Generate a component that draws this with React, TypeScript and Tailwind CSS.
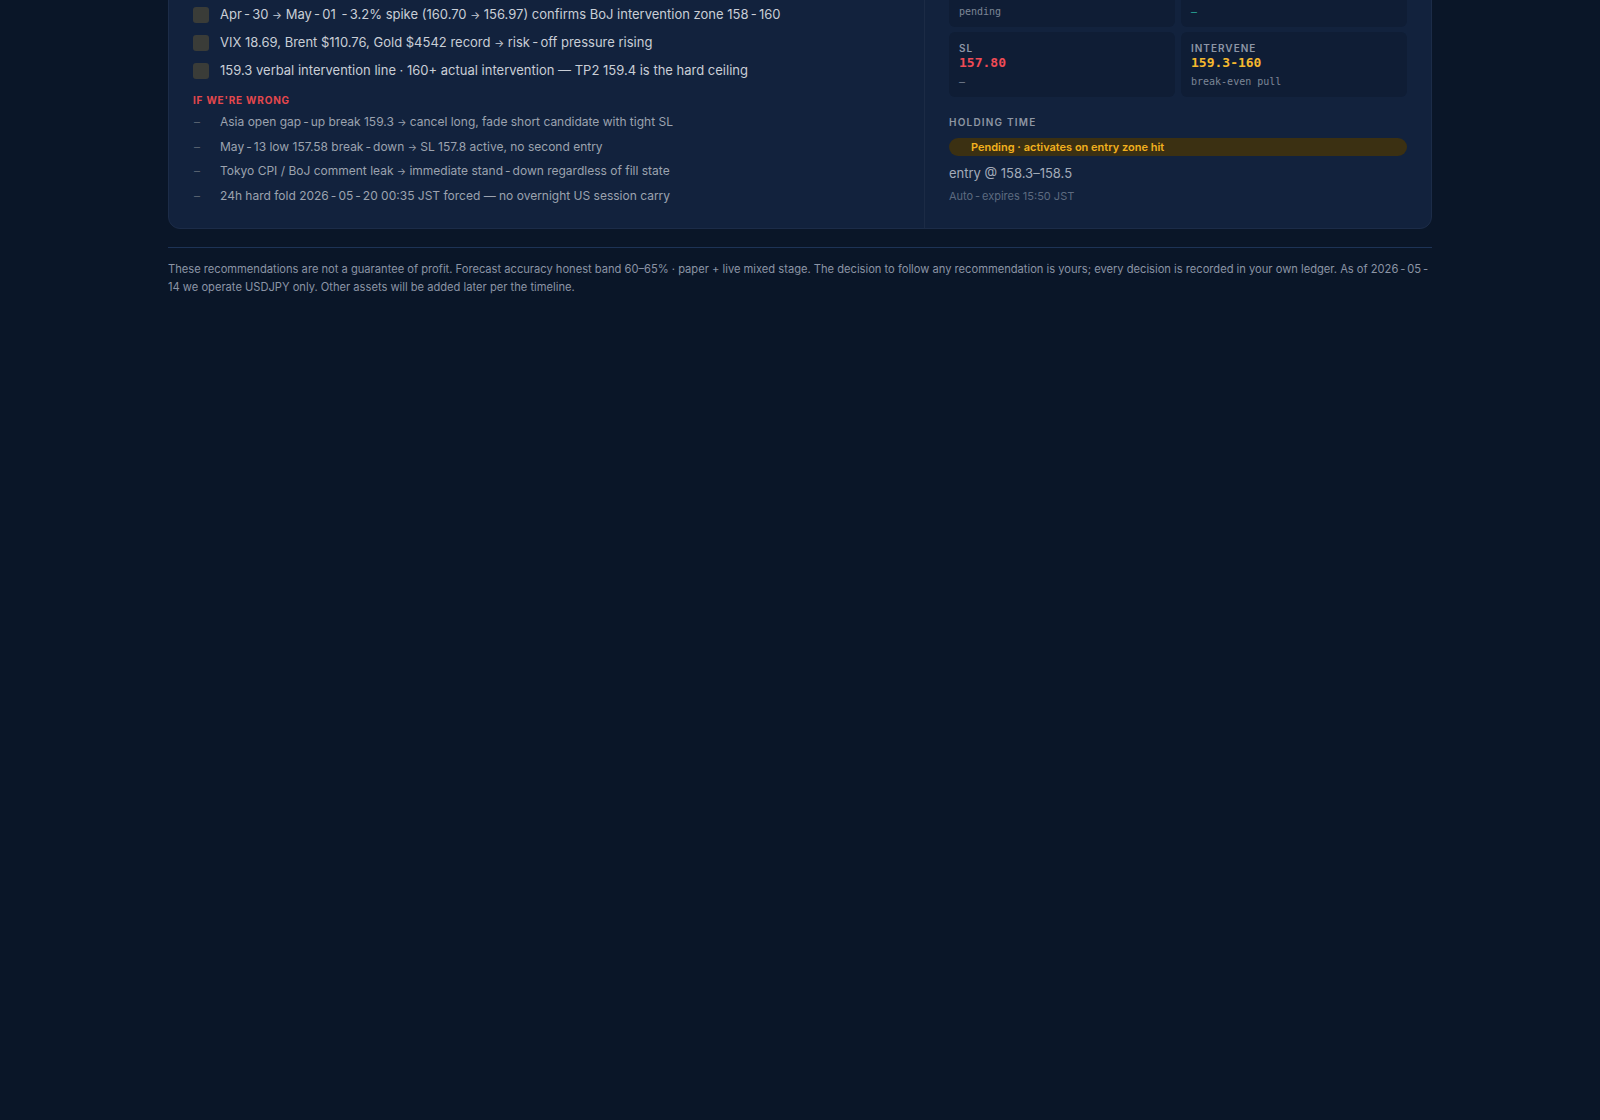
import React from "react";

function Hy({ text }: { text: string }) {
  const tokens = text.split(/(-|→)/);
  return (
    <>
      {tokens.map((t, i) => {
        if (t === "-")
          return (
            <span key={i} className="px-[0.17em]">
              -
            </span>
          );
        if (t === "→")
          return (
            <span key={i} className="text-[0.8em]">
              →
            </span>
          );
        return <React.Fragment key={i}>{t}</React.Fragment>;
      })}
    </>
  );
}

const checks = [
  "Apr-30 → May-01 -3.2% spike (160.70 → 156.97) confirms BoJ intervention zone 158-160",
  "VIX 18.69, Brent $110.76, Gold $4542 record → risk-off pressure rising",
  "159.3 verbal intervention line · 160+ actual intervention — TP2 159.4 is the hard ceiling",
];

const wrongs = [
  "Asia open gap-up break 159.3 → cancel long, fade short candidate with tight SL",
  "May-13 low 157.58 break-down → SL 157.8 active, no second entry",
  "Tokyo CPI / BoJ comment leak → immediate stand-down regardless of fill state",
  "24h hard fold 2026-05-20 00:35 JST forced — no overnight US session carry",
];

type Cell = { label: string; value: string; valueCls: string; sub: string; subCls: string };

const cells: Cell[] = [
  { label: "ENTRY", value: "158.3-158.5", valueCls: "text-[#e2e8f0]", sub: "pending", subCls: "text-[#7d8696]" },
  { label: "TP1", value: "159.00", valueCls: "text-[#2dd4bf]", sub: "—", subCls: "text-[#2bb3a0]" },
  { label: "SL", value: "157.80", valueCls: "text-[#f04b55]", sub: "—", subCls: "text-[#7d8696]" },
  { label: "INTERVENE", value: "159.3-160", valueCls: "text-[#f5b82e]", sub: "break-even pull", subCls: "text-[#7d8696]" },
];

const footer =
  "These recommendations are not a guarantee of profit. Forecast accuracy honest band 60–65% · paper + live mixed stage. The decision to follow any recommendation is yours; every decision is recorded in your own ledger. As of 2026-05-14 we operate USDJPY only. Other assets will be added later per the timeline.";

export default function App() {
  return (
    <div
      className="min-h-[1120px] w-full overflow-hidden bg-[#0a1628]"
      style={{ fontFamily: "Inter, 'Noto Sans', sans-serif" }}
    >
      <div className="mx-auto w-[1264px]">
        <div className="-mt-[63px] grid grid-cols-[756px_1fr] rounded-xl border border-[#1c2c48] bg-[#12223d]">
          {/* Left column */}
          <div className="border-r border-[#1c2b45] px-6 pt-6 pb-[20px]">
            <div className="mb-[25px] text-[10px] font-bold leading-[14px] tracking-[0.08em] text-[#2dd4bf]">
              WHY WE'RE IN
            </div>
            <div>
              {checks.map((c) => (
                <div key={c} className="flex h-[28px] items-center">
                  <span className="mr-[11px] h-4 w-4 shrink-0 rounded-[3px] bg-[#3a3c38]" />
                  <span className="text-[13px] text-[#c9ced6]">
                    <Hy text={c} />
                  </span>
                </div>
              ))}
            </div>
            <div className="mt-[8px] text-[10px] font-bold leading-[14px] tracking-[0.08em] text-[#e5484d]">
              IF WE'RE WRONG
            </div>
            <div className="mt-[3px]">
              {wrongs.map((w) => (
                <div key={w} className="flex h-[24.5px] items-center">
                  <span className="w-[27px] shrink-0 pl-[1px] text-[12px] text-[#56606f]">–</span>
                  <span className="text-[12px] text-[#9ca3af]">
                    <Hy text={w} />
                  </span>
                </div>
              ))}
            </div>
          </div>

          {/* Right column */}
          <div className="px-6 pt-6 pb-6">
            <div className="grid grid-cols-2 gap-x-[6px] gap-y-[5px]">
              {cells.map((c) => (
                <div key={c.label} className="rounded-md bg-[#0f1d35] px-[10px] pt-[9px] pb-[8px]">
                  <div className="text-[10px] font-semibold leading-[14px] tracking-[0.1em] text-[#8d96a6]">
                    {c.label}
                  </div>
                  <div
                    className={`text-[13px] font-bold leading-[16px] ${c.valueCls}`}
                    style={{ fontFamily: "'DejaVu Sans Mono', monospace" }}
                  >
                    {c.value}
                  </div>
                  <div
                    className={`mt-1 text-[10px] leading-[14px] ${c.subCls}`}
                    style={{ fontFamily: "'DejaVu Sans Mono', monospace" }}
                  >
                    {c.sub}
                  </div>
                </div>
              ))}
            </div>
            <div className="mt-[18px] text-[10px] font-semibold leading-[14px] tracking-[0.12em] text-[#8e96a3]">
              HOLDING TIME
            </div>
            <div className="mt-[9px] flex h-[18px] items-center rounded-full bg-[#3b3012] pl-[22px] text-[11px] font-semibold text-[#f2b01e]">
              Pending · activates on entry zone hit
            </div>
            <div className="mt-[8px] text-[13px] leading-[18px] text-[#a3abb9]">entry @ 158.3–158.5</div>
            <div className="mt-[6px] text-[11px] leading-[16px] text-[#5d6b80]">
              <Hy text="Auto-expires 15:50 JST" />
            </div>
          </div>
        </div>

        <div className="mt-[18px] border-t border-[#1d3356] pt-[12px] text-[11.15px] leading-[18px] text-[#8b94a5]">
          <Hy text={footer} />
        </div>
      </div>
    </div>
  );
}
